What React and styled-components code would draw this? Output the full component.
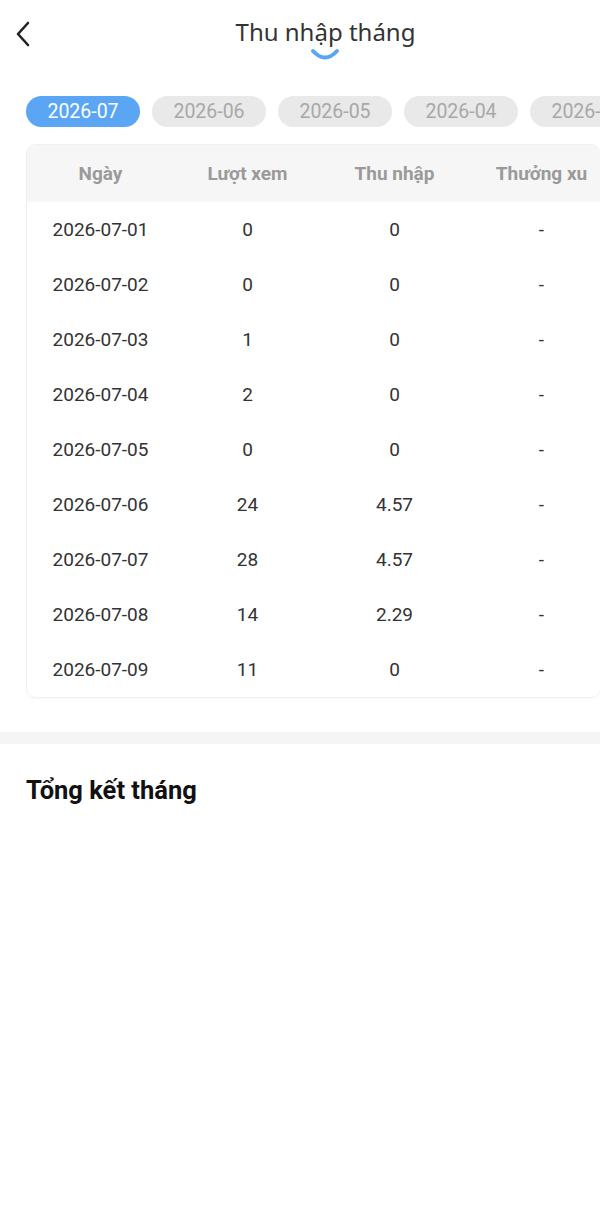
import React from "react";
import styled, { createGlobalStyle } from "styled-components";

const Global = createGlobalStyle`
  body {
    margin: 0;
    background: #fff;
    font-family: Roboto, "Liberation Sans", sans-serif;
  }
`;

const Page = styled.div`
  width: 600px;
  min-height: 1227px;
  background: #fff;
  overflow: hidden;
`;

const Header = styled.div`
  position: relative;
  height: 68px;
  display: flex;
  align-items: center;
  justify-content: center;
`;

const Back = styled.div`
  position: absolute;
  left: 14px;
  top: 20px;
  width: 20px;
  height: 28px;
`;

const Title = styled.div`
  font-family: "Noto Sans", "Open Sans", sans-serif;
  font-size: 24px;
  color: #333;
  margin-top: -6px;
  margin-left: 51px;
`;

const Spinner = styled.svg`
  position: absolute;
  left: 309px;
  top: 46px;
`;

const Tabs = styled.div`
  display: flex;
  gap: 12px;
  padding: 28px 0 0 26px;
  white-space: nowrap;
`;

const Tab = styled.div`
  flex: 0 0 auto;
  width: 114px;
  height: 31px;
  border-radius: 16px;
  display: flex;
  align-items: center;
  justify-content: center;
  font-size: 19.5px;
  color: ${(p) => (p.active ? "#fff" : "#a8a8a8")};
  background: ${(p) => (p.active ? "#5aa6f5" : "#e9e9e9")};
`;

const Card = styled.div`
  margin: 17px 0 0 26px;
  width: 573px;
  border: 1px solid #f0f0f0;
  border-radius: 10px;
  overflow: hidden;
  box-shadow: 0 1px 3px rgba(0, 0, 0, 0.03);
`;

const Row = styled.div`
  display: grid;
  grid-template-columns: repeat(4, 147px);
  height: ${(p) => (p.head ? "57px" : "55px")};
  align-items: center;
  background: ${(p) => (p.head ? "#f6f6f6" : "#fff")};
`;

const Cell = styled.div`
  text-align: center;
  font-size: 19px;
  font-weight: ${(p) => (p.head ? 700 : 400)};
  color: ${(p) => (p.head ? "#9a9a9a" : "#333")};
  white-space: nowrap;
`;

const Band = styled.div`
  height: 12px;
  background: #f5f5f5;
  margin-top: 34px;
`;

const Summary = styled.div`
  padding: 31px 0 0 26px;
  font-size: 25.5px;
  font-weight: 700;
  color: #111;
`;

const months = ["2026-07", "2026-06", "2026-05", "2026-04", "2026-03"];

const rows = [
  ["2026-07-01", "0", "0", "-"],
  ["2026-07-02", "0", "0", "-"],
  ["2026-07-03", "1", "0", "-"],
  ["2026-07-04", "2", "0", "-"],
  ["2026-07-05", "0", "0", "-"],
  ["2026-07-06", "24", "4.57", "-"],
  ["2026-07-07", "28", "4.57", "-"],
  ["2026-07-08", "14", "2.29", "-"],
  ["2026-07-09", "11", "0", "-"],
];

export default function App() {
  return (
    <Page>
      <Global />
      <Header>
        <Back>
          <svg width="20" height="28" viewBox="0 0 20 28">
            <path d="M14 3 L4 14 L14 25" fill="none" stroke="#222" strokeWidth="2.6" strokeLinecap="round" strokeLinejoin="round" />
          </svg>
        </Back>
        <Title>Thu nhập tháng</Title>
        <Spinner width="32" height="18" viewBox="0 0 32 18">
          <path d="M4 5 Q16 18 28 5" fill="none" stroke="#5aa6f5" strokeWidth="4" strokeLinecap="round" />
        </Spinner>
      </Header>
      <Tabs>
        {months.map((m, i) => (
          <Tab key={m} active={i === 0}>{m}</Tab>
        ))}
      </Tabs>
      <Card>
        <Row head>
          <Cell head>Ngày</Cell>
          <Cell head>Lượt xem</Cell>
          <Cell head>Thu nhập</Cell>
          <Cell head>Thưởng xu</Cell>
        </Row>
        {rows.map((r) => (
          <Row key={r[0]}>
            {r.map((c, j) => (
              <Cell key={j}>{c}</Cell>
            ))}
          </Row>
        ))}
      </Card>
      <Band />
      <Summary>Tổng kết tháng</Summary>
    </Page>
  );
}
